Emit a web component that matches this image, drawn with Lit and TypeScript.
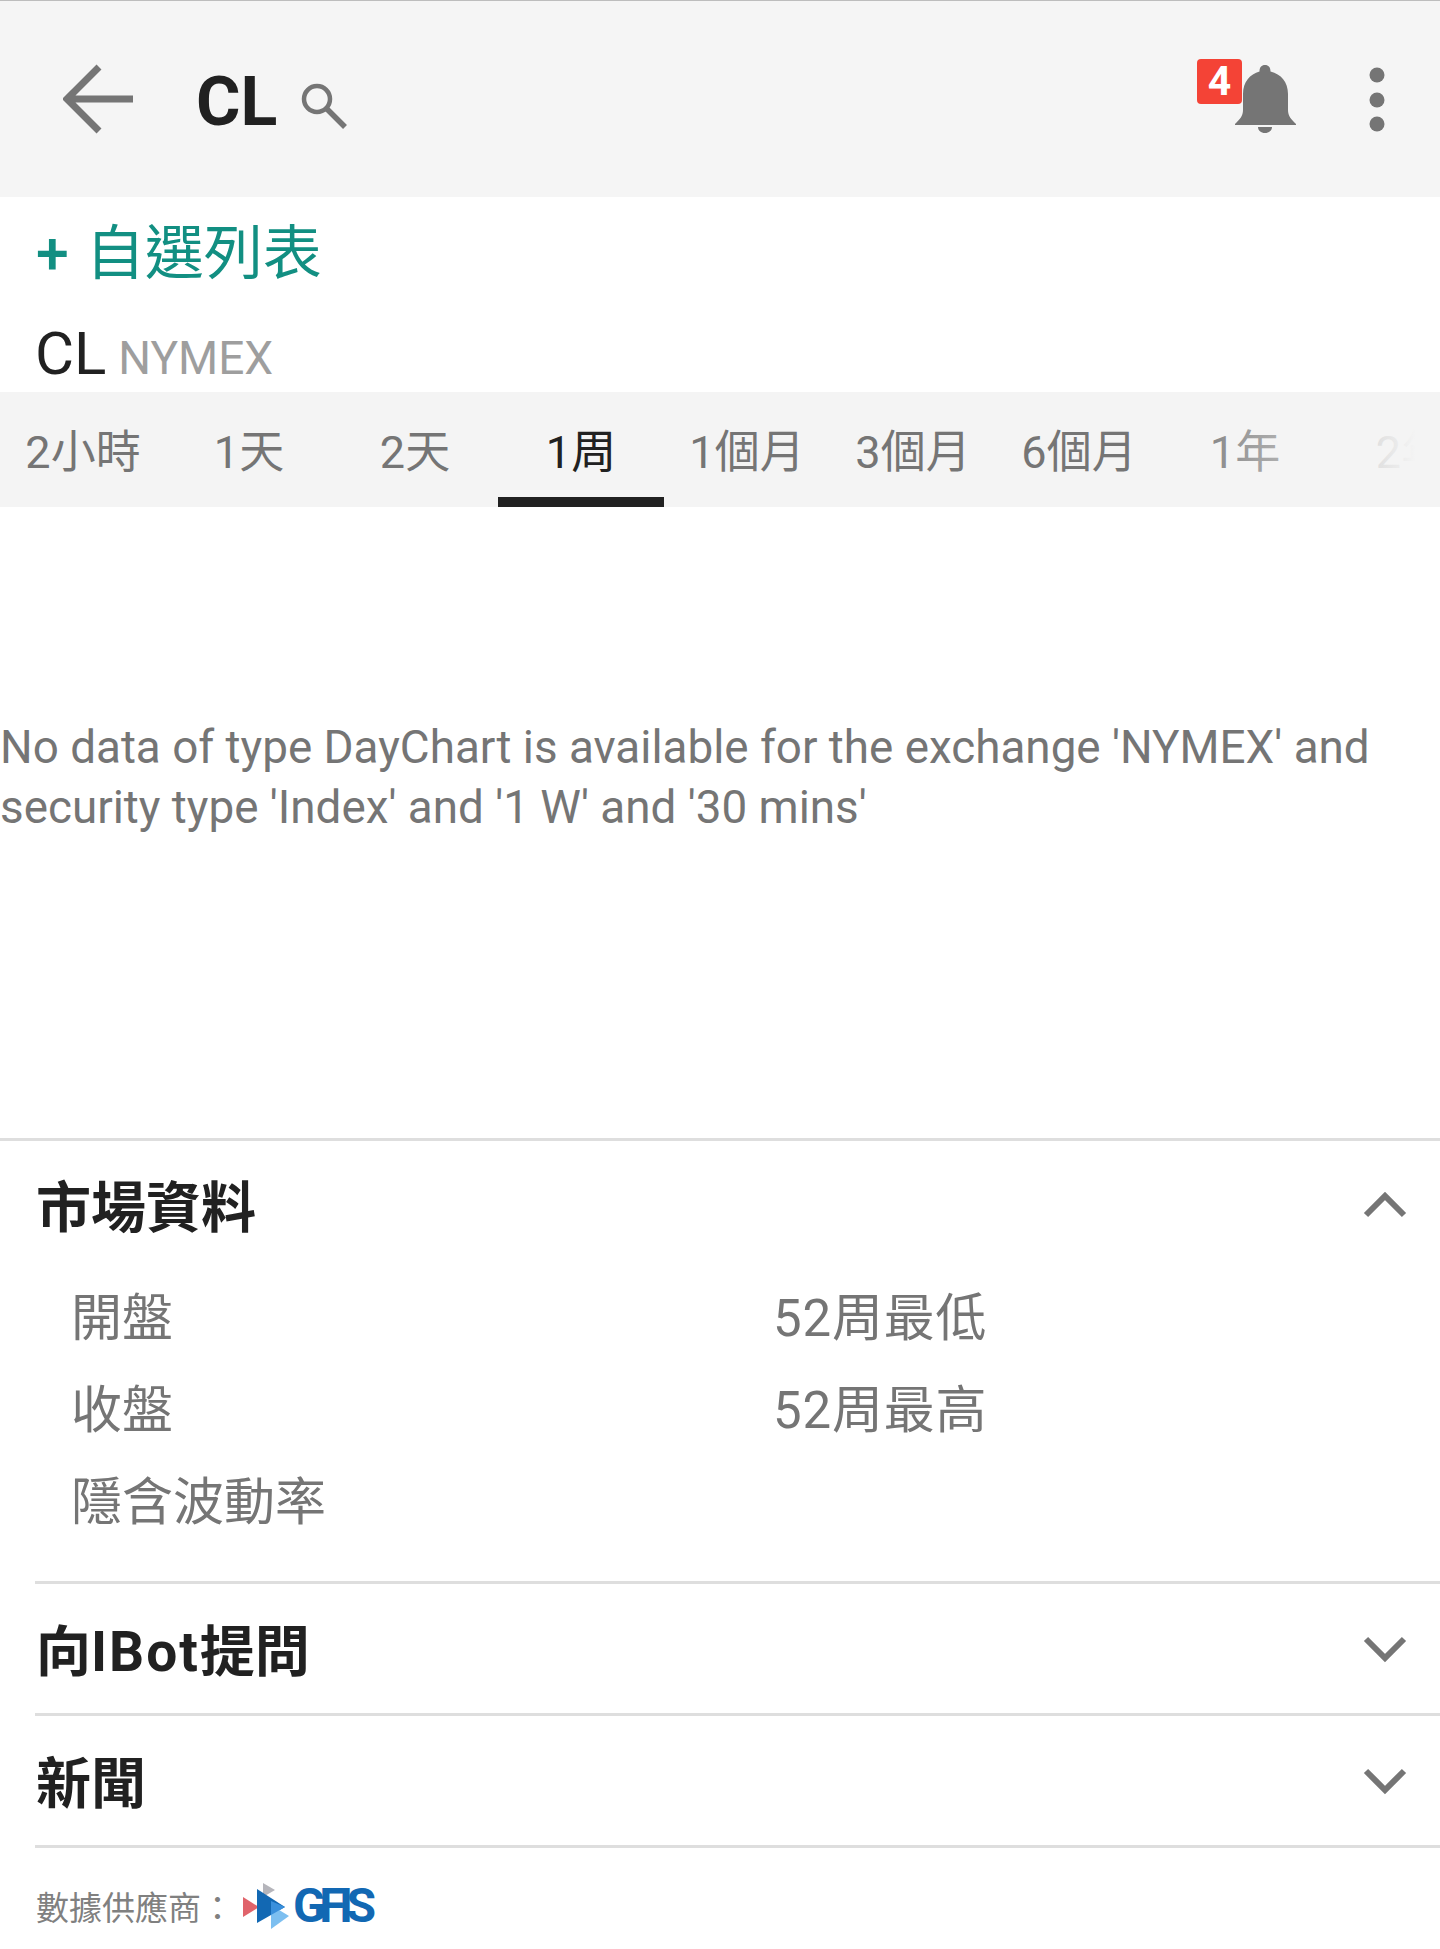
import { LitElement, html, css, svg } from "lit";
import { customElement } from "lit/decorators.js";

const TABS = ["2小時", "1天", "2天", "1周", "1個月", "3個月", "6個月", "1年", "2年"];
const chevron = (up: boolean) => html`<svg class="chev" viewBox="0 0 44 30" width="44" height="30">
  <path d=${up ? "M3 26 L22 7 L41 26" : "M3 4 L22 23 L41 4"} fill="none" stroke="#757575" stroke-width="6"></path></svg>`;

@customElement("app-root")
export class AppRoot extends LitElement {
  static styles = css`
    :host { display: block; width: 1440px; height: 1949px; background: #fff; overflow: hidden;
      font-family: Roboto, "Noto Sans CJK TC", sans-serif; color: #212121; }
    .top { height: 197px; box-sizing: border-box; border-top: 1px solid #bdbdbd; background: #f5f5f5;
      display: flex; align-items: flex-start; position: relative; }
    .back { margin: 63px 0 0 63px; }
    .sym { margin: 58px 0 0 61px; font-size: 68px; line-height: 86px; font-weight: 700; }
    .search { margin: 82px 0 0 24px; }
    .right { margin-left: auto; display: flex; align-items: flex-start; }
    .bellwrap { position: relative; width: 62px; height: 68px; margin: 64px 73px 0 0; }
    .badge { position: absolute; left: -37px; top: -6px; width: 45px; height: 45px; border-radius: 4px; background: #f44336;
      color: #fff; font-size: 41px; font-weight: 700; line-height: 45px; text-align: center; }
    .more { margin: 66px 55px 0 0; }
    .watch { height: 113px; box-sizing: border-box; padding: 19px 0 0 36px; color: #128f82; font-size: 59px; line-height: 76px; white-space: nowrap; }
    .plus { display: inline-block; margin-right: 17px; font-weight: 500; }
    .title { height: 82px; box-sizing: border-box; padding: 3px 0 0 35px; line-height: 82px; font-size: 60px; white-space: nowrap; }
    .title span { font-size: 46px; color: #9e9e9e; margin-left: -3px; }
    .tabs { height: 115px; background: #f4f4f4; display: flex; position: relative; overflow: hidden; }
    .tab { flex: 0 0 166px; box-sizing: border-box; height: 115px; line-height: 121px; text-align: center; font-size: 45px; color: #757575; }
    .tab.on { color: #212121; border-bottom: 10px solid #212121; }
    .fade { position: absolute; top: 0; bottom: 0; right: 0; width: 270px;
      background: linear-gradient(to right, rgba(244,244,244,0), #f4f4f4 91%); }
    .msg { height: 631px; box-sizing: border-box; padding-top: 211px; font-size: 45.8px; line-height: 60px; color: #757575; }
    .sec { border-top: 3px solid #dedede; }
    .sec.in { margin-left: 35px; }
    .head { height: 129px; display: flex; align-items: center; justify-content: space-between; padding: 0 33px 0 36px;
      font-size: 55px; font-weight: 700; }
    .sec.in .head { padding-left: 1px; }
    .sec.in .t { margin-top: -4px; }
    .sec.in .chev { margin-top: 2px; }
    .first .chev { margin-top: 1px; }
    .lat { letter-spacing: 2px; }
    .first { height: 124px; }
    .grid { display: grid; grid-template-columns: 702px 1fr; grid-auto-rows: 92px; padding: 8px 0 0 71px; height: 308px; box-sizing: content-box;
      font-size: 51px; line-height: 92px; color: #757575; }
    .num { letter-spacing: 0.8px; }
    .foot { border-top: 3px solid #dedede; margin-left: 35px; display: flex; align-items: center; height: 100px; padding-top: 18px; box-sizing: border-box; font-size: 33px; color: #808080; }
    .foot .lbl { margin-left: 1px; width: 207px; white-space: nowrap; }
    .logo { display: flex; align-items: center; position: relative; }
    .gfis { font-size: 48px; line-height: 46px; font-weight: 700; color: #1268b3; letter-spacing: -6.5px; margin-left: -4px; }
  `;
  render() {
    return html`
      <div class="top">
        <svg class="back" width="72" height="70" viewBox="0 0 72 70"><path d="M70 35H6M36 3 L4 35 L36 67" fill="none" stroke="#757575" stroke-width="7"></path></svg>
        <div class="sym">CL</div>
        <svg class="search" width="46" height="46" viewBox="0 0 46 46"><circle cx="16" cy="16" r="13" fill="none" stroke="#757575" stroke-width="4.5"></circle><path d="M26 26 L44 44" stroke="#757575" stroke-width="5.5"></path></svg>
        <div class="right">
          <div class="bellwrap">
            <svg width="62" height="68" viewBox="0 0 62 68"><path fill="#757575" d="M31 0c3.500 0 5.500 2.300 5.500 6.500C47 9 54 17 54 29v16c0 6 3 9 8 14v1H1v-1c5-5 8-8 8-14V29C9 17 16 9 25.500 6.500 25.500 2.300 27.500 0 31 0zM24 62h14c0 3.500-3 6-7 6s-7-2.500-7-6z"></path></svg>
            <div class="badge">4</div>
          </div>
          <svg class="more" width="16" height="66" viewBox="0 0 16 66"><circle cx="8" cy="8" r="7.500" fill="#757575"></circle><circle cx="8" cy="33" r="7.500" fill="#757575"></circle><circle cx="8" cy="57" r="7.500" fill="#757575"></circle></svg>
        </div>
      </div>
      <div class="watch"><span class="plus">+</span>自選列表</div>
      <div class="title">CL <span>NYMEX</span></div>
      <div class="tabs">
        ${TABS.map((t) => html`<div class="tab ${t === "1周" ? "on" : ""}">${t}</div>`)}
        <div class="fade"></div>
      </div>
      <div class="msg">No data of type DayChart is available for the exchange 'NYMEX' and<br />security type 'Index' and '1 W' and '30 mins'</div>
      <div class="sec">
        <div class="head first">市場資料 ${chevron(true)}</div>
        <div class="grid">
          <div>開盤</div><div class="num">52周最低</div>
          <div>收盤</div><div class="num">52周最高</div>
          <div>隱含波動率</div><div></div>
        </div>
      </div>
      <div class="sec in"><div class="head"><span class="t">向<span class="lat">IBot</span>提問</span> ${chevron(false)}</div></div>
      <div class="sec in"><div class="head"><span class="t">新聞</span> ${chevron(false)}</div></div>
      <div class="foot">
        <div class="lbl">數據供應商：</div>
        <div class="logo">
          <svg width="54" height="46" viewBox="0 0 54 46">
            ${svg`<polygon points="20,0 32,7 20,14" fill="#b5b5bb"></polygon>
            <polygon points="0,14 16,24 0,34" fill="#e0636b"></polygon>
            <polygon points="14,6 42,24 14,40" fill="#1268b3"></polygon>
            <polygon points="28,22 46,33 28,46" fill="#7dbff0"></polygon>
            <polygon points="28,18 42,24 28,32" fill="#3a90dc"></polygon>`}
          </svg>
          <div class="gfis">GFIS</div>
        </div>
      </div>
    `;
  }
}
